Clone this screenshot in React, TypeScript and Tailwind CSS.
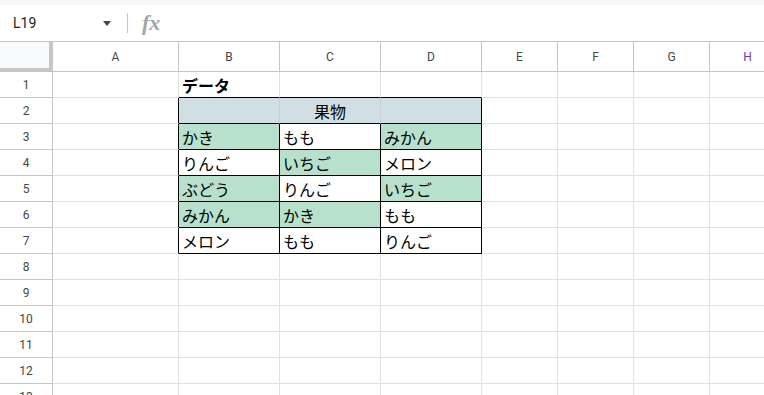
import React from "react";

const cols = ["A", "B", "C", "D", "E", "F", "G", "H"];
const widths = ["w-[126px]", "w-[101px]", "w-[101px]", "w-[101px]", "w-[76px]", "w-[76px]", "w-[76px]", "w-[76px]"];

const G = "bg-[#b7e1cd]";
const W = "bg-white";

// rows 3..7 of the table (B..D)
const body: [string, string][][] = [
  [["かき", G], ["もも", W], ["みかん", G]],
  [["りんご", W], ["いちご", G], ["メロン", W]],
  [["ぶどう", G], ["りんご", W], ["いちご", G]],
  [["みかん", G], ["かき", G], ["もも", W]],
  [["メロン", W], ["もも", W], ["りんご", W]],
];

const jp = "font-['Noto_Sans_CJK_JP','Noto_Sans',sans-serif]";

const RowHead = ({ n }: { n: number }) => (
  <div className="w-[53px] shrink-0 h-full flex items-center justify-center border-r border-b border-[#c4c7c5] bg-white text-[12px] text-[#444746] font-['Roboto',sans-serif]">
    {n}
  </div>
);

const App = () => {
  const rows = Array.from({ length: 13 }, (_, i) => i + 1);

  return (
    <div className="w-[764px] h-[395px] overflow-hidden bg-white font-['Roboto','Liberation_Sans',sans-serif]">
      {/* formula bar */}
      <div className="h-[5px] bg-[#f7f8fa]" />
      <div className="h-[37px] flex items-center border-b border-[#c4c7c5]">
        <div className="w-[127px] flex items-center justify-between pl-[13px] pr-[16px] text-[14px] text-[#1f1f1f]">
          <span>L19</span>
          <svg width="8" height="5" viewBox="0 0 8 5">
            <path d="M0 0h8L4 5z" fill="#444746" />
          </svg>
        </div>
        <div className="w-px h-[20px] bg-[#c4c7c5]" />
        <span className="ml-[14px] text-[22px] leading-none italic font-semibold text-[#a3a6a8] font-['Liberation_Serif',serif]">
          fx
        </span>
      </div>

      {/* column headers */}
      <div className="flex h-[30px]">
        <div className="w-[53px] shrink-0 h-full bg-[#f8f9fa] border-r-4 border-b-4 border-[#c4c7c5]" />
        {cols.map((c, i) => (
          <div
            key={c}
            className={`${widths[i]} shrink-0 h-full flex items-center justify-center border-r border-b border-[#c4c7c5] text-[12px] ${c === "H" ? "text-[#6a3fa0]" : "text-[#444746]"}`}
          >
            {c}
          </div>
        ))}
      </div>

      {/* grid rows */}
      {rows.map((r) => (
        <div key={r} className={`flex h-[26px] ${jp} text-[16px] text-black`}>
          <RowHead n={r} />
          {cols.map((c, i) => {
            const inTable = r >= 2 && r <= 7 && i >= 1 && i <= 3;
            let cls = "border-r border-b border-[#e1e1e1]";
            let content: React.ReactNode = null;
            let bg = "";
            if (i === 0 && r >= 2 && r <= 7) cls = "border-r border-b border-r-black border-b-[#e1e1e1]";
            if (r === 1 && i >= 1 && i <= 3) {
              cls = "border-r border-b border-r-[#e1e1e1] border-b-black";
              if (i === 1) content = <span className="pl-[3px] font-bold">データ</span>;
            }
            if (inTable) {
              cls = "border-r border-b border-black";
              if (r === 2) {
                bg = "bg-[#d0dfe3]";
                if (i < 3) cls = "border-r border-b border-r-[#c3d2d6] border-b-black";
                if (i === 2) content = <span className="w-full text-center">果物</span>;
              } else {
                const [t, b] = body[r - 3][i - 1];
                bg = b;
                content = <span className="pl-[3px]">{t}</span>;
              }
            }
            return (
              <div key={c} className={`${widths[i]} shrink-0 h-full flex items-center overflow-hidden whitespace-nowrap ${cls} ${bg}`}>
                {content}
              </div>
            );
          })}
        </div>
      ))}
    </div>
  );
};

export default App;
